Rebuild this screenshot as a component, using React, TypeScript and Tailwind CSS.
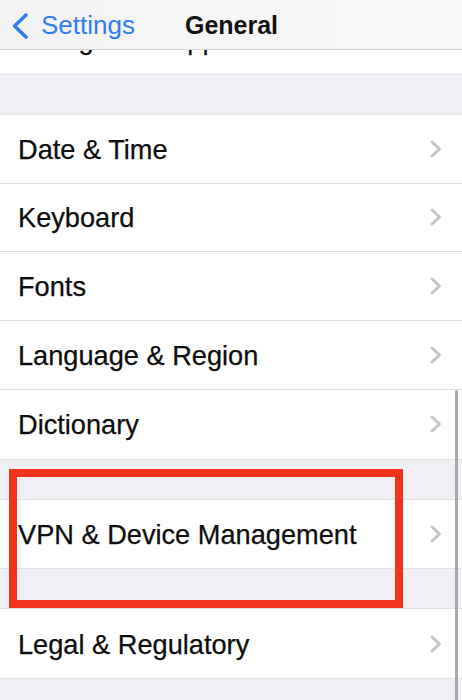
import React from "react";

const font = { fontFamily: '"Liberation Sans", Arial, sans-serif' };

function Chevron() {
  return (
    <svg width="14" height="20" viewBox="0 0 14 20" className="shrink-0">
      <polyline points="3,3 10.5,10 3,17" fill="none" stroke="#c4c4c8" strokeWidth="3" strokeLinecap="round" strokeLinejoin="round" />
    </svg>
  );
}

function Row({ label, last = false }: { label: string; last?: boolean }) {
  return (
    <div className="flex h-[68.75px] bg-white">
      <div className={`flex flex-1 items-center pl-[18px] pr-[19px] ${last ? "" : "border-b border-[#dedee2]"}`}>
        <span className="flex-1 pt-[3px] text-[27.2px] text-[#0d0d0d] [-webkit-text-stroke:0.25px_#0d0d0d]">{label}</span>
        <Chevron />
      </div>
    </div>
  );
}

function Gap() {
  return <div className="h-[41px] border-y border-[#e2e2e6] bg-[#efeff4]" />;
}

export default function App() {
  return (
    <div className="relative h-[700px] w-[462px] overflow-hidden bg-[#efeff4]" style={font}>
      <div className="flex flex-col">
        <div className="h-[5px] bg-white" />
        <Row label="Background App Refresh" last />
        <Gap />
        <Row label="Date & Time" />
        <Row label="Keyboard" />
        <Row label="Fonts" />
        <Row label="Language & Region" />
        <Row label="Dictionary" last />
        <Gap />
        <Row label="VPN & Device Management" last />
        <Gap />
        <Row label="Legal & Regulatory" last />
        <div className="h-[30px] border-t border-[#e2e2e6] bg-[#efeff4]" />
      </div>

      {/* Navigation bar */}
      <div className="absolute left-0 top-0 flex h-[50px] w-full items-center border-b border-[#d6d6d8] bg-gradient-to-r from-[#f3f3f3] to-[#f8f8f8] pt-[2px]">
        <div className="flex items-center pl-[10px]">
          <svg width="20" height="28" viewBox="0 0 20 28">
            <polyline points="16,3 4.5,14 16,25" fill="none" stroke="#2f7cf4" strokeWidth="3.6" strokeLinecap="round" strokeLinejoin="round" />
          </svg>
          <span className="ml-[11px] text-[26px] text-[#2f7cf4]">Settings</span>
        </div>
        <span className="ml-[50px] text-[25px] font-bold text-[#111111]">General</span>
      </div>

      {/* Scroll indicator */}
      <div className="absolute left-[455px] top-[390px] h-[320px] w-[3px] rounded-full bg-[#a9a9ab]" />

      {/* Red highlight box */}
      <div className="absolute left-[9px] top-[469px] h-[139px] w-[394px] border-[8px] border-[#f1321c]" />
    </div>
  );
}
